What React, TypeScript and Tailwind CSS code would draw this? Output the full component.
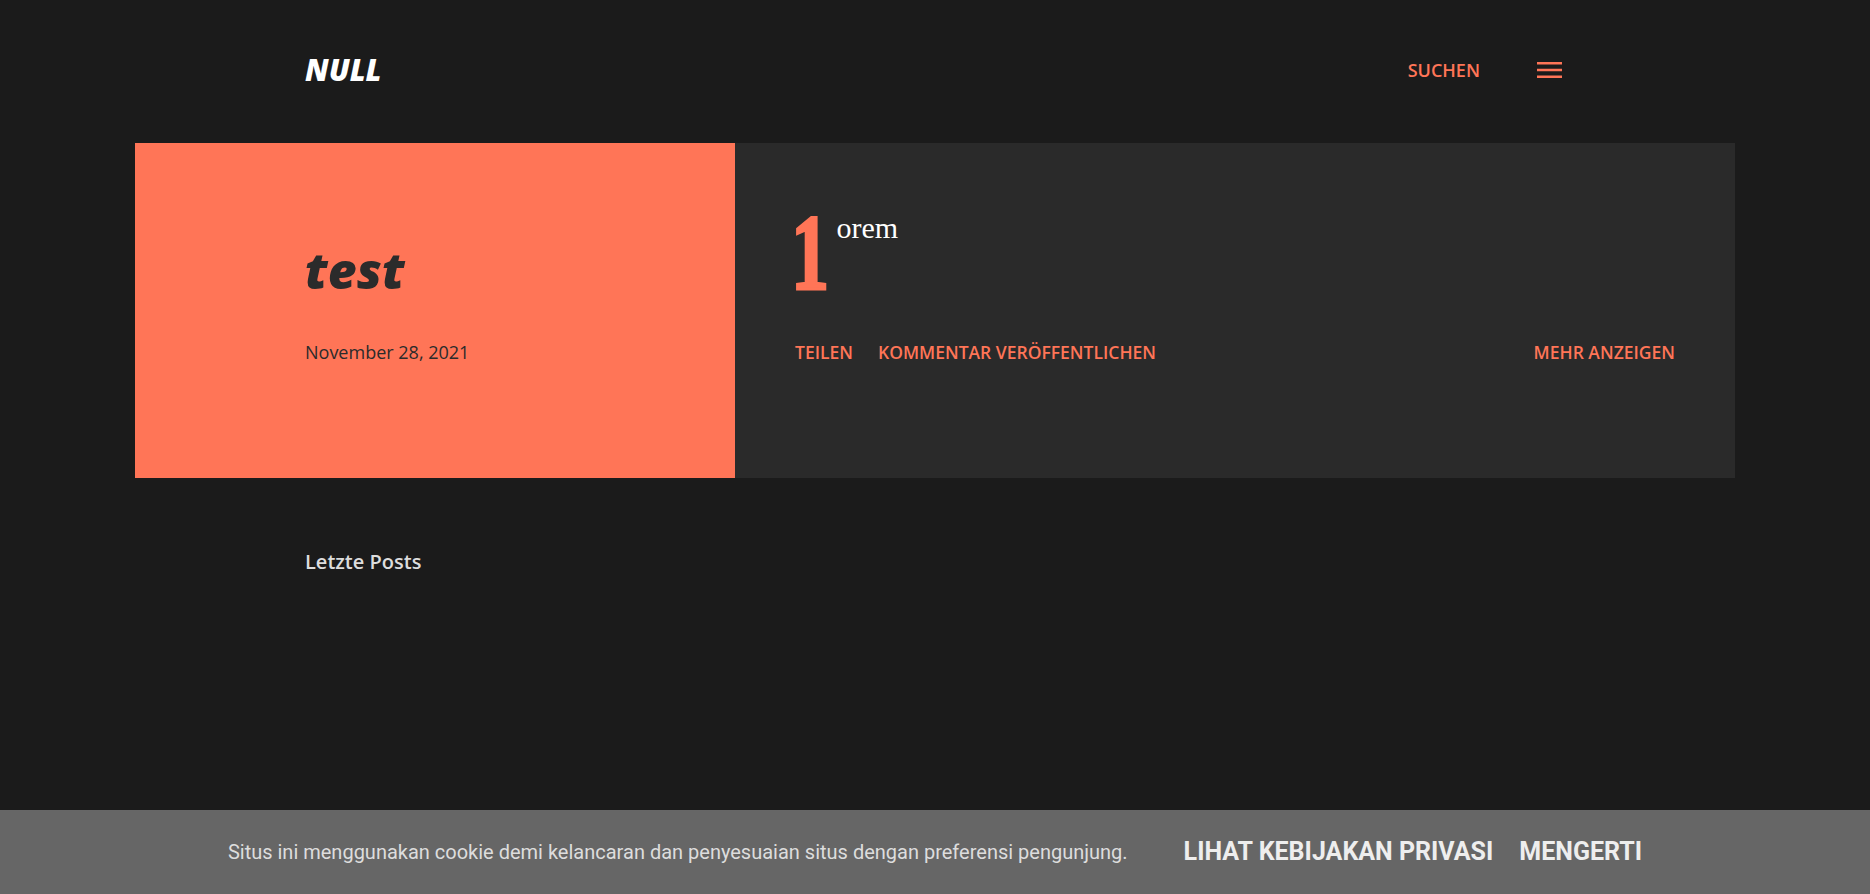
function Hamburger() {
  return (
    <svg width="25" height="16" viewBox="0 0 25 16" className="text-[#ff7557]" fill="currentColor">
      <rect x="0" y="0" width="25" height="2.5" />
      <rect x="0" y="6.75" width="25" height="2.5" />
      <rect x="0" y="13.5" width="25" height="2.5" />
    </svg>
  )
}

export default function App() {
  return (
    <div className="min-h-screen bg-[#1b1b1b] font-['Open_Sans',_'Liberation_Sans',_sans-serif]">
      {/* Header */}
      <header className="mx-auto w-[1260px] h-[143px] pb-[3px] flex items-center justify-between">
        <a className="text-[30px] leading-[1.2] font-extrabold italic text-white">NULL</a>
        <div className="flex items-center pr-[3px]">
          <span className="text-[18px] leading-6 font-semibold text-[#ff7557]">SUCHEN</span>
          <button className="ml-[57px] flex items-center">
            <Hamburger />
          </button>
        </div>
      </header>

      {/* Featured post */}
      <article className="mx-auto w-[1600px] h-[335px] flex">
        <div className="w-[600px] bg-[#ff7557] pl-[170px] pt-[102px]">
          <h1 className="text-[50px] leading-[50px] font-extrabold italic text-[#2b2b2b]">test</h1>
          <div className="mt-[45px] text-[18px] leading-6 text-[#2b2b2b]">November 28, 2021</div>
        </div>
        <div className="flex-1 bg-[#2a2a2a] px-[60px] pt-[55px]">
          <div className="flex items-start">
            {/* drop cap */}
            <span className="-ml-[4px] inline-block origin-left scale-x-[0.7] text-[109px] leading-none font-bold text-[#ff7557] [-webkit-text-stroke:3px_#ff7557] font-['Liberation_Serif',_serif]">
              1
            </span>
            <span className="-ml-[9px] mt-[15px] text-[30px] leading-none text-white font-['Liberation_Serif',_serif]">orem</span>
          </div>
          <div className="mt-[33px] flex items-center text-[17.5px] leading-6 font-semibold text-[#ff7557]">
            <span>TEILEN</span>
            <span className="ml-[25px]">KOMMENTAR VERÖFFENTLICHEN</span>
            <span className="ml-auto">MEHR ANZEIGEN</span>
          </div>
        </div>
      </article>

      {/* Recent posts */}
      <section className="mx-auto w-[1260px] mt-[72px]">
        <h3 className="text-[20px] leading-6 font-semibold text-[#dddddd]">Letzte Posts</h3>
      </section>

      {/* Cookie bar */}
      <div className="fixed bottom-0 left-0 right-0 h-[84px] bg-[#666666] flex items-center justify-center font-['Roboto',_sans-serif]">
        <span className="text-[20px] text-[#dddddd]">
          Situs ini menggunakan cookie demi kelancaran dan penyesuaian situs dengan preferensi pengunjung.
        </span>
        <a className="ml-[56px] text-[25px] font-bold text-[#eeeeee]">LIHAT KEBIJAKAN PRIVASI</a>
        <a className="ml-[26px] text-[25px] font-bold text-[#eeeeee]">MENGERTI</a>
      </div>
    </div>
  )
}
